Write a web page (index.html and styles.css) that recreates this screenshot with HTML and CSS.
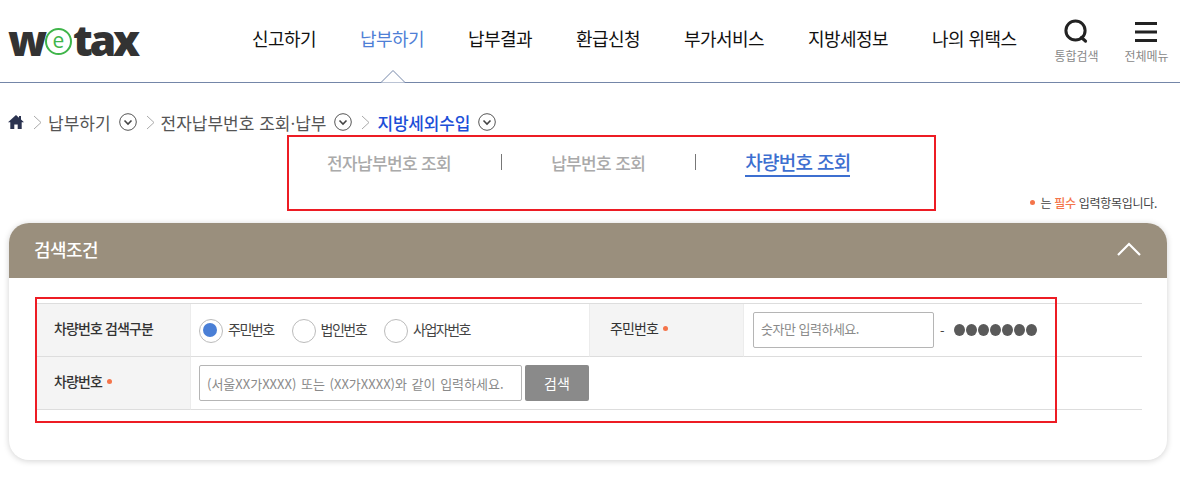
FILE: index.html
```html
<!DOCTYPE html>
<html lang="ko">
<head>
<meta charset="utf-8">
<title>wetax</title>
<link rel="stylesheet" href="styles.css">
</head>
<body>
<div id="header">
  <a class="logo"><span>w</span><span class="logo-e">e</span><span>tax</span></a>
  <ul class="gnb">
    <li>신고하기</li>
    <li class="on">납부하기</li>
    <li>납부결과</li>
    <li>환급신청</li>
    <li>부가서비스</li>
    <li>지방세정보</li>
    <li>나의 위택스</li>
  </ul>
  <div class="util">
    <a class="util-btn">
      <svg width="26" height="26" viewBox="0 0 26 26"><circle cx="12.5" cy="11.5" r="9.6" fill="none" stroke="#222" stroke-width="3"/><path d="M18.5 18.5l4 3.6" stroke="#222" stroke-width="3.2" stroke-linecap="round"/></svg>
      <span>통합검색</span>
    </a>
    <a class="util-btn">
      <svg width="26" height="26" viewBox="0 0 26 26"><path d="M2 4.5h22M2 13h22M2 21.5h22" stroke="#222" stroke-width="3"/></svg>
      <span>전체메뉴</span>
    </a>
  </div>
  <svg class="gnb-arrow" width="26" height="14" viewBox="0 0 26 14"><path d="M0 13.5h1L13 1.5l12 12h1" fill="#fff" stroke="#7486a8"/></svg>
</div>

<div class="location">
  <svg width="16" height="14" viewBox="0 0 16 14"><path d="M8 0L0 7.2h2.300V14h4V9.500h3.400V14h4V7.200H16L13 4.500V1h-2v1.700z" fill="#2b3350"/></svg>
  <svg class="sep" width="9" height="15" viewBox="0 0 9 15"><path d="M1 1l7 6.500-7 6.500" fill="none" stroke="#aaa"/></svg>
  <span>납부하기</span>
  <svg class="more" width="18" height="18" viewBox="0 0 18 18"><circle cx="9" cy="9" r="8.300" fill="#fff" stroke="#555"/><path d="M5.500 7.500L9 11l3.500-3.500" fill="none" stroke="#444" stroke-width="1.600"/></svg>
  <svg class="sep" width="9" height="15" viewBox="0 0 9 15"><path d="M1 1l7 6.500-7 6.500" fill="none" stroke="#aaa"/></svg>
  <span>전자납부번호 조회·납부</span>
  <svg class="more" width="18" height="18" viewBox="0 0 18 18"><circle cx="9" cy="9" r="8.300" fill="#fff" stroke="#555"/><path d="M5.500 7.500L9 11l3.500-3.500" fill="none" stroke="#444" stroke-width="1.600"/></svg>
  <svg class="sep" width="9" height="15" viewBox="0 0 9 15"><path d="M1 1l7 6.500-7 6.500" fill="none" stroke="#aaa"/></svg>
  <b>지방세외수입</b>
  <svg class="more" width="18" height="18" viewBox="0 0 18 18"><circle cx="9" cy="9" r="8.300" fill="#fff" stroke="#555"/><path d="M5.500 7.500L9 11l3.500-3.500" fill="none" stroke="#444" stroke-width="1.600"/></svg>
</div>

<div class="tabs">
  <a>전자납부번호 조회</a>
  <i></i>
  <a>납부번호 조회</a>
  <i></i>
  <a class="on">차량번호 조회</a>
</div>

<p class="req-note"><em class="dot"></em>는 <b>필수</b> 입력항목입니다.</p>

<div class="box">
  <div class="box-title">
    <h2>검색조건</h2>
    <svg width="26" height="16" viewBox="0 0 26 16"><path d="M2 14L13 3l11 11" fill="none" stroke="#fff" stroke-width="2.200"/></svg>
  </div>
  <div class="box-body">
    <div class="form-grid">
      <div class="th">차량번호 검색구분</div>
      <div class="td radios">
        <label class="radio checked">주민번호</label>
        <label class="radio">법인번호</label>
        <label class="radio">사업자번호</label>
      </div>
      <div class="th th-reg">주민번호<em class="dot"></em></div>
      <div class="td jumin">
        <input class="txt txt-short" type="text" placeholder="숫자만 입력하세요.">
        <span class="dash">-</span>
        <span class="mask"><i></i><i></i><i></i><i></i><i></i><i></i><i></i></span>
      </div>
      <div class="th">차량번호<em class="dot"></em></div>
      <div class="td wide">
        <input class="txt txt-long" type="text" placeholder="(서울XX가XXXX) 또는 (XX가XXXX)와 같이 입력하세요.">
        <button class="btn-search" type="button">검색</button>
      </div>
    </div>
  </div>
</div>

<div class="mark mark-tabs"></div>
<div class="mark mark-form"></div>
</body>
</html>
```

FILE: styles.css
```css
* { box-sizing: border-box; }
body { margin: 0; height: 490px; overflow: hidden; position: relative; background: #fff; color: #333; font-family: "Noto Sans CJK KR", "Noto Sans", sans-serif; font-size: 13px; }
a { color: inherit; text-decoration: none; }
ul { list-style: none; margin: 0; padding: 0; }

/* header */
#header { position: relative; display: flex; height: 83px; border-bottom: 1px solid #7486a8; }
.logo { display: flex; align-items: center; width: 252px; height: 78px; padding-left: 8px; font-family: "Open Sans", sans-serif; font-weight: 800; font-size: 43px; letter-spacing: -3.200px; color: #333; }
.logo-e { display: flex; align-items: center; justify-content: center; flex: none; width: 27px; height: 27px; margin: 5px 1px 0 1px; border: 2px solid #3fb54a; border-radius: 50%; background: #fff; color: #3fb54a; font-family: "Open Sans", sans-serif; font-weight: 400; font-size: 21px; letter-spacing: 0; line-height: 1; padding-bottom: 3px; }
.gnb { display: flex; gap: 44px; height: 76px; align-items: center; font-size: 18px; letter-spacing: -0.560px; color: #111; }
.gnb .on { color: #4f7fd6; }
.util { display: flex; gap: 26px; margin-left: 38px; padding-top: 19px; }
.util-btn { display: flex; flex-direction: column; align-items: center; width: 44px; color: #888; font-size: 12px; letter-spacing: -0.040px; white-space: nowrap; }
.util-btn span { margin-top: 2px; }
.gnb-arrow { position: absolute; left: 380px; top: 69px; }

/* location */
.location { display: flex; align-items: center; height: 24px; margin-top: 27px; padding-left: 8px; font-size: 17px; letter-spacing: 0; color: #555; }
.location .sep { margin: 0 6px 0 9px; }
.location .more { margin-left: 8px; }
.location b { margin-left: 1px; font-weight: 500; letter-spacing: -0.200px; color: #1d4fd8; }

/* tabs */
.tabs { display: flex; align-items: center; height: 34px; margin-left: 327px; margin-top: 11px; font-size: 17px; font-weight: 500; letter-spacing: -0.640px; color: #aaa; }
.tabs i { width: 1px; height: 16px; margin: 0 49px 0 50px; background: #777; }
.tabs .on { margin-top: 1px; font-size: 19px; letter-spacing: -0.720px; color: #3d6fd0; border-bottom: 2px solid #3d6fd0; line-height: 26px; }

/* required note */
.req-note { display: flex; align-items: center; justify-content: flex-end; height: 16px; margin: 15px 23px 0 0; font-size: 12px; letter-spacing: -0.300px; color: #444; }
.req-note b { margin: 0 3px; font-weight: 500; color: #f4744a; }
.dot { display: inline-block; width: 5px; height: 5px; border-radius: 50%; background: #f4744a; }
.req-note .dot { margin-right: 6px; }

/* search box */
.box { width: 1158px; height: 237px; margin: 13px 0 0 9px; border-radius: 20px; background: #fff; box-shadow: 0 1px 6px rgba(0,0,0,.18); }
.box-title { display: flex; align-items: center; justify-content: space-between; height: 55px; padding: 0 25px 3px; border-radius: 20px 20px 0 0; background: #9a8f7d; color: #fff; }
.box-title h2 { margin: 0; font-size: 18px; font-weight: 500; letter-spacing: -0.560px; }
.box-body { padding: 25px 25px 0 28px; }
.form-grid { display: grid; grid-template-columns: 154px 398px 155px 1fr; grid-template-rows: 53px 53px; border-top: 1px solid #ddd; }
.th, .td { display: flex; align-items: center; border-bottom: 1px solid #ddd; }
.th { padding-left: 17px; padding-bottom: 4px; background: #f4f4f4; border-right: 1px solid #ececec; font-size: 14px; font-weight: 500; letter-spacing: -0.900px; color: #333; }
.th .dot { margin-left: 5px; }
.th-reg { padding-left: 20px; border-left: 1px solid #ececec; font-weight: 400; }
.td { padding-left: 8px; }
.wide { grid-column: 2 / 5; }
.jumin { padding-left: 9px; }
.radios { gap: 18px; padding-left: 8px; }
.radio { position: relative; display: flex; align-items: center; height: 22px; padding: 0 0 3px 29px; font-size: 14px; letter-spacing: -1.500px; color: #444; }
.radio::before { content: ""; position: absolute; left: 0; top: 0; width: 22px; height: 22px; border: 1px solid #bbb; border-radius: 50%; background: #fff; }
.checked::after { content: ""; position: absolute; left: 4px; top: 4px; width: 14px; height: 14px; border-radius: 50%; background: #4a7fd6; }
.txt { height: 36px; padding: 0 7px; border: 1px solid #b5b5b5; border-radius: 2px; font: 13px "Noto Sans CJK KR", sans-serif; letter-spacing: -0.500px; color: #333; }
.txt::placeholder { color: #8a8a8a; opacity: 1; }
.txt-short { width: 181px; padding-bottom: 3px; }
.txt-long { width: 323px; letter-spacing: 0; word-spacing: 1px; }
.dash { margin: 0 9px 0 6px; color: #444; }
.mask { display: flex; gap: 1px; }
.mask i { width: 11px; height: 12px; border-radius: 50%; background: #5a5a5a; }
.btn-search { width: 64px; height: 36px; margin-left: 3px; border: 0; border-radius: 2px; background: #8a8a8a; color: #fff; font: 14px "Noto Sans CJK KR", sans-serif; }

/* red annotation frames lying over the page */
.mark { position: absolute; border: 2px solid #ed1c24; pointer-events: none; }
.mark-tabs { left: 287px; top: 135px; width: 649px; height: 76px; }
.mark-form { left: 35px; top: 297px; width: 1022px; height: 126px; }
```
